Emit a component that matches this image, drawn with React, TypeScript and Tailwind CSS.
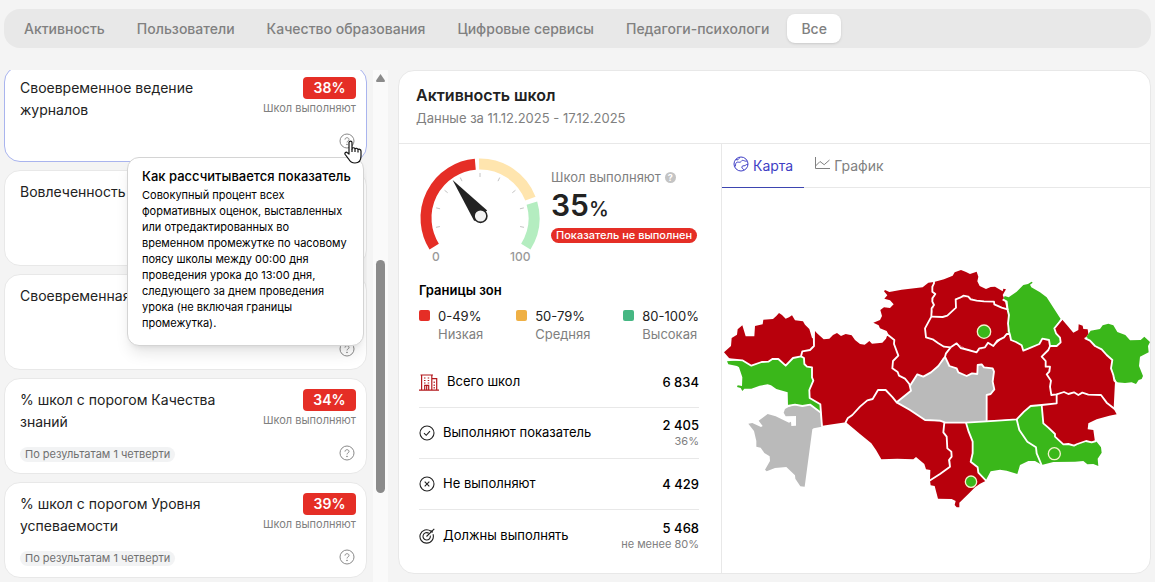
import React from "react";

const TABS = [
  "Активность",
  "Пользователи",
  "Качество образования",
  "Цифровые сервисы",
  "Педагоги-психологи",
  "Все",
];

const CARDS = [
  {
    id: "journals",
    title: "Своевременное ведение журналов",
    percent: "38%",
    active: true,
  },
  { id: "involvement", title: "Вовлеченность" },
  { id: "timely", title: "Своевременная" },
  {
    id: "quality",
    title: "% школ с порогом Качества знаний",
    percent: "34%",
    period: "По результатам 1 четверти",
  },
  {
    id: "level",
    title: "% школ с порогом Уровня успеваемости",
    percent: "39%",
    period: "По результатам 1 четверти",
  },
];

const ZONES = [
  { range: "0-49%", label: "Низкая", color: "bg-[#e52e26]" },
  { range: "50-79%", label: "Средняя", color: "bg-[#efb045]" },
  { range: "80-100%", label: "Высокая", color: "bg-[#46b783]" },
];

const RED = "#b8000c";
const GREEN = "#3ab71a";
const GRAY = "#bababa";

// Точка на дуге спидометра, угол в градусах против часовой стрелки
const polar = (r: number, deg: number) => {
  const a = (deg * Math.PI) / 180;
  return [61 + r * Math.cos(a), 62 - r * Math.sin(a)];
};

const arc = (from: number, to: number) => {
  const [x1, y1] = polar(54, from);
  const [x2, y2] = polar(54, to);
  const large = from - to > 180 ? 1 : 0;
  return `M${x1} ${y1}A54 54 0 ${large} 1 ${x2} ${y2}`;
};

function QuestionIcon() {
  return (
    <svg className="w-4 h-4" viewBox="0 0 16 16" fill="none" stroke="#8a8a8a">
      <circle cx="8" cy="8" r="7" />
      <path d="M6 6.6C6 5.4 6.9 4.7 8 4.7s2 .7 2 1.8c0 1.4-2 1.4-2 2.9" />
      <circle cx="8" cy="11.4" r=".4" fill="#8a8a8a" />
    </svg>
  );
}

function Gauge() {
  return (
    <svg className="w-[122px] h-[114px] shrink-0" viewBox="0 0 122 114">
      <g fill="none" strokeWidth="11">
        <path d={arc(212, 95)} stroke="#e52e26" />
        <path d={arc(91, 21)} stroke="#ffe5ae" />
        <path d={arc(16, -32)} stroke="#b4edc0" />
      </g>
      {[-12, 13, 38, 64, 90, 116, 142, 167, 192].map((deg) => {
        const [x1, y1] = polar(41, deg);
        const [x2, y2] = polar(45, deg);
        return (
          <line key={deg} x1={x1} y1={y1} x2={x2} y2={y2} stroke="#c4c4c4" />
        );
      })}
      <path d="M33.6 24 68.2 54.6 55.2 65Z" fill="#222" />
      <circle cx="61.5" cy="60" r="6.4" fill="#f2f2f2" stroke="#222" strokeWidth="1.6" />
      <g fontFamily="Inter, sans-serif" fontSize="12" fontWeight="500" fill="#999">
        <text x="13" y="105">0</text>
        <text x="91" y="105">100</text>
      </g>
    </svg>
  );
}

function KazakhstanMap() {
  return (
    <svg className="w-full" viewBox="21 0 1284 780" role="img" aria-label="Карта">
      <g>
        <path
          fill={RED}
          d="M27 277 48 258 50 234 66 224 68 208 82 196 92 229 118 229 120 198 143 193 145 179 174 177 184 168 192 159 201 165 212 176 222 172 231 166 240 181 264 184 270 194 283 207 291 234 297 236 297 258 285 270 262 275 258 289 234 294 212 318 190 298 172 297 160 305 140 306 109 318 82 302 44 296Z"
        />
        <path
          fill={GREEN}
          d="M36 304 82 300 109 317 140 306 160 305 172 297 190 297 212 317 234 294 258 289 267 294 268 312 276 320 291 322 291 352 295 362 283 390 284 414 316 433 316 456 286 433 262 437 240 433 219 437 218 397 197 391 184 387 168 376 158 373 134 377 109 386 88 386 82 393 77 384 66 381 68 376 81 378 82 352 72 322 66 318 40 313Z"
        />
        <path
          fill={GRAY}
          d="M222 440 240 434 262 438 286 434 316 456 320 500 296 505 292 508 269 680 256 679 241 656 240 646 214 621 180 624 155 634 150 629 165 603 164 589 148 579 137 563 124 560 124 543 117 513 100 491 112 489 138 501 143 498 131 482 158 462 182 469 222 488 228 485 229 498 243 497 243 468 212 469 206 458 210 447Z"
        />
        <path
          fill={RED}
          d="M300 213 306 220 326 238 343 236 354 225 366 219 378 228 392 222 410 226 420 240 435 252 449 254 455 250 463 243 471 251 502 248 513 236 516 228 523 228 538 240 537 252 550 287 534 303 532 325 548 336 552 347 570 356 583 372 588 392 545 427 533 412 512 390 489 390 473 417 457 421 435 440 412 465 398 475 393 487 322 497 316 433 284 414 283 390 295 362 291 352 291 322 276 320 268 312 267 294 258 289 262 274 285 270 297 258Z"
        />
      </g>

      <g transform="translate(435 0)">
        <path
          fill={RED}
          d="M75 90 88 96 125 89 188 82 205 68 222 66 217 95 226 102 217 125 222 135 214 170 195 205 198 232 218 238 252 260 272 262 258 280 255 290 235 318 213 337 190 350 172 343 151 377 135 356 117 347 113 336 97 325 99 303 115 287 102 252 103 240 88 228 80 213 60 205 56 196 40 188 60 180 66 168 61 150 72 142 90 144 101 133 90 121 73 116 82 106 72 94Z"
        />
        <path
          fill={RED}
          d="M222 66 252 58 278 47 284 37 303 30 318 36 330 42 350 35 355 50 352 64 359 78 378 87 392 81 405 80 428 94 430 86 438 88 428 105 434 119 440 148 425 143 403 133 402 125 372 124 350 122 325 110 300 113 287 118 288 142 262 168 214 170 222 135 217 125 226 102 217 95Z"
        />
        <path
          fill={RED}
          d="M214 170 262 168 288 142 287 118 300 113 325 110 350 122 402 125 403 133 440 148 447 165 443 215 447 222 432 232 410 242 400 258 385 248 375 262 350 276 325 272 310 262 290 250 272 262 252 260 218 238 198 232 195 205Z"
        />
        <path
          fill={RED}
          d="M255 290 258 280 272 262 290 250 325 272 350 276 375 262 385 248 400 258 432 232 447 222 453 240 468 246 485 256 490 272 538 252 547 236 567 240 570 258 565 270 545 290 557 303 557 320 570 320 560 343 573 362 570 380 574 405 590 403 590 430 545 435 512 440 492 455 470 478 380 482 380 405 392 402 403 388 398 365 402 335 398 325 372 322 365 313 353 315 352 342 336 340 320 348 295 337 290 325 268 318Z"
        />
        <path
          fill={GRAY}
          d="M255 290 268 318 290 325 295 337 320 348 336 340 352 342 353 315 365 313 372 322 398 325 402 335 398 365 403 388 392 402 380 405 380 482 318 488 253 488 195 480 150 450 110 427 153 392 151 375 172 343 190 350 213 337 235 318 248 295Z"
        />
        <path
          fill={RED}
          d="M110 427 150 450 195 480 253 486 250 517 260 530 262 565 275 580 270 620 210 662 211 630 198 628 193 612 168 591 160 598 112 596 64 598 48 570 34 550 0 522 -42 487 -37 475 0 440 22 421 38 417 54 390 77 390Z"
        />
        <path
          fill={RED}
          d="M253 488 318 488 326 515 338 545 338 580 332 605 353 622 355 638 378 662 360 671 345 682 325 702 298 728 298 742 290 742 284 735 287 723 275 717 234 716 224 678 212 676 210 662 270 620 275 580 262 565 260 530 250 517Z"
        />
        <path
          fill={GREEN}
          d="M318 488 380 483 470 478 478 510 502 545 528 562 530 580 545 614 525 603 505 603 480 615 472 642 440 632 420 629 392 634 378 660 355 638 353 622 332 605 338 580 338 545 326 515Z"
        />
      </g>

      <g transform="translate(855 0)">
        <path
          fill={GREEN}
          d="M10 118 14 108 26 112 50 95 70 75 84 72 95 65 98 68 90 74 94 82 120 97 140 112 182 177 163 205 170 222 182 235 180 248 170 258 150 258 147 240 127 236 118 252 85 266 70 272 65 256 48 246 33 240 22 215 24 190 22 150 20 128Z"
        />
        <path
          fill={RED}
          d="M187 179 205 200 220 218 235 210 236 193 248 197 250 207 263 208 265 222 256 235 270 242 285 258 305 268 337 300 333 325 345 365 341 445 325 430 303 405 265 404 247 398 235 405 222 397 205 402 192 396 154 405 150 380 153 362 140 343 150 320 137 320 137 303 125 290 145 270 150 258 170 258 182 245 180 233 170 222 163 205Z"
        />
        <path
          fill={GREEN}
          d="M265 222 272 212 300 207 308 196 325 191 340 196 352 216 376 225 390 241 422 240 433 230 450 246 444 258 446 277 420 290 417 318 429 348 425 357 416 360 408 372 395 367 375 369 350 367 340 345 333 325 337 300 305 268 285 258 270 242 256 235Z"
        />
        <path
          fill={RED}
          d="M125 435 170 430 170 403 192 396 205 402 222 397 235 405 247 398 265 404 303 405 340 445 350 463 328 467 290 478 265 490 263 508 280 510 285 545 258 545 232 555 205 555 190 553 165 530 165 522 145 503 130 490Z"
        />
        <path
          fill={GREEN}
          d="M50 478 72 455 92 438 125 435 130 490 145 503 165 522 165 530 190 553 232 555 258 543 290 545 303 562 305 578 293 596 295 618 280 612 262 613 250 603 225 605 160 606 125 615 110 580 108 562 82 545 58 510Z"
        />
      </g>

      {/* границы областей */}
      <g fill="none" stroke="#fff" strokeWidth="5.5" strokeLinejoin="round">
        <path d="M34 297 82 301 109 317 140 306 160 305 172 297 190 297 212 317 234 294 258 289 262 274 285 270 297 258 296 215" />
        <path d="M258 289 267 294 268 312 276 320 291 322 291 352 295 362 283 390 284 414 316 433 321 500" />
        <path d="M217 438 240 434 262 438 286 434 318 458" />
        <g transform="translate(435 0)">
          <path d="M84 225 103 240 102 252 115 287 99 303 97 325 113 336 117 347 135 356 148 372 153 392 110 427 98 412 77 390 54 390 38 417 22 421 0 440 -23 465 -37 475 -44 489" />
          <path d="M222 62 222 70 217 80 217 95 226 102 217 115 217 125 222 135 215 145 214 170 195 205 198 232 218 238 235 250 252 260 272 262" />
          <path d="M214 170 248 171 262 167 288 143 287 118 300 113 310 107 325 110 332 118 350 122 372 124 402 125 403 133 425 143 445 149" />
          <path d="M272 262 290 250 302 264 325 270 350 277 358 265 375 262 384 248 400 258 412 242 432 232 440 222 450 222" />
          <path d="M272 262 258 280 255 290 235 318 213 337 190 350 172 343 150 377" />
          <path d="M255 290 268 318 290 325 295 337 320 348 336 340 352 342 353 315 365 313 372 322 398 325 402 335 398 365 403 388 392 402 380 405 380 482" />
          <path d="M110 427 150 450 195 480 240 482 256 488 318 488 380 484 470 478 492 455 512 438 545 435 590 430 590 403" />
          <path d="M253 488 250 517 260 530 262 565 274 575 275 590 267 600 270 620 240 642 207 663" />
          <path d="M318 488 326 515 338 545 338 580 332 605 353 622 355 638 380 664" />
        </g>
        <g transform="translate(855 0)">
          <path d="M8 118 20 125 23 150 27 165 24 190 27 215 30 225 33 240 48 246 65 256 70 272 85 266 118 252 127 236 147 240 150 258 170 258 182 247 180 233 168 220 163 205 186 177" />
          <path d="M150 258 145 270 125 290 137 303 137 320 150 320 148 335 140 343 153 362 150 380 154 405 170 403 192 396 205 402 222 397 235 405 247 398 265 404 303 405 320 428 345 448" />
          <path d="M262 234 256 235 270 242 285 258 305 268 320 285 337 300 333 325 340 345 343 362 352 371" />
          <path d="M125 435 130 490 145 503 165 522 165 530 190 553 205 552 222 557 232 552 258 543 275 547 288 543" />
          <path d="M50 478 58 510 82 545 108 562 110 580 126 618" />
        </g>
      </g>

      <g fill={GREEN} stroke="#f4f4cf" strokeWidth="4">
        <circle cx="807" cy="215" r="20" />
        <circle cx="768" cy="665" r="17" />
        <circle cx="1018" cy="581" r="18" />
      </g>
    </svg>
  );
}

function Tooltip() {
  return (
    <div
      role="tooltip"
      className="absolute top-[90px] right-[2px] z-20 w-[237px] rounded-xl border border-[#d4d4d4] bg-white px-3.5 pt-2 pb-3.5 shadow-lg text-black"
    >
      <p className="mb-px text-[13px] leading-5 font-medium whitespace-nowrap">
        Как рассчитывается показатель
      </p>
      <p className="text-[11px] leading-4">
        Совокупный процент всех формативных оценок, выставленных или
        отредактированных во временном промежутке по часовому поясу школы между
        00:00 дня проведения урока до 13:00 дня, следующего за днем проведения
        урока (не включая границы промежутка).
      </p>
    </div>
  );
}

function Cursor() {
  return (
    <svg
      className="absolute top-[73px] right-1 z-30 w-[18px] h-6"
      viewBox="0 0 18 24"
      fill="#fff"
      stroke="#111"
      strokeWidth="1.2"
      strokeLinejoin="round"
    >
      <path d="M5 14V2.6C5 .5 8 .5 8 2.6V9c.3-1.8 3-1.6 3 .2.5-1.4 3-1.2 3 .6.6-1 3-.7 3 1.2v5c0 4-2 7-6 7-3.6 0-5-1.3-6.5-4.2L1.2 14.5c-1-1.8.9-3 2.2-1.8Z" />
      <path d="M8 9v3M11 9.5V12M14 10.2V12.5" fill="none" />
    </svg>
  );
}

function CheckIcon() {
  return (
    <svg className="w-4 h-4" viewBox="0 0 16 16" fill="none" stroke="#222" strokeWidth="1.1">
      <circle cx="8" cy="8" r="7" />
      <path d="m5 8.2 2.2 2.1L11 6.2" />
    </svg>
  );
}

function CrossIcon() {
  return (
    <svg className="w-4 h-4" viewBox="0 0 16 16" fill="none" stroke="#222" strokeWidth="1.1">
      <circle cx="8" cy="8" r="7" />
      <path d="m5.7 5.7 4.6 4.6M10.3 5.7l-4.6 4.6" />
    </svg>
  );
}

function TargetIcon() {
  return (
    <svg className="w-4 h-4" viewBox="0 0 16 16" fill="none" stroke="#222" strokeWidth="1.1">
      <path d="M11.8 3.2A6.7 6.7 0 1 0 14 6.3" />
      <path d="M9.8 5.3A3.7 3.7 0 1 0 11.3 7.6" />
      <path d="M7.5 8.5 15.3.8M12 2.2V4h2" />
    </svg>
  );
}

function BuildingIcon() {
  return (
    <svg className="w-5 h-[17px]" viewBox="0 0 20 17" fill="none" stroke="#b3191d" strokeWidth="1.2">
      <path d="M0 16.2h20M1.5 1h12.5M2.6 1v15M12.8 1v15M12.8 4.6h4.9V16" />
      <path d="M5.7 16v-4.6h4V16M7.7 11.4V16" />
      <path d="M5 4h1.5M8.7 4h1.5M5 6.5h1.5M8.7 6.5h1.5M5 9h1.5M8.7 9h1.5M15.2 7.5V9M15.2 10.5V12M15.2 13v1.5" />
    </svg>
  );
}

const STATS = [
  { label: "Всего школ", value: "6 834", icon: <BuildingIcon /> },
  { label: "Выполняют показатель", value: "2 405", note: "36%", icon: <CheckIcon /> },
  { label: "Не выполняют", value: "4 429", icon: <CrossIcon /> },
  { label: "Должны выполнять", value: "5 468", note: "не менее 80%", icon: <TargetIcon /> },
];

export default function App() {
  return (
    <div className="h-screen flex flex-col bg-[#f4f4f4] font-['Inter',sans-serif] text-[#222] px-1 pt-[9px] overflow-hidden">
      <nav className="flex items-center gap-1 h-[39px] shrink-0 rounded-2xl bg-[#e8e8e8] px-1.5">
        {TABS.map((tab) => (
          <button
            key={tab}
            className={`h-[29px] px-3.5 rounded-lg text-[14px] font-medium whitespace-nowrap text-[#808080] ${
              tab === "Все" ? "bg-white shadow-sm" : ""
            }`}
          >
            {tab}
          </button>
        ))}
      </nav>

      <div className="flex flex-1 min-h-0 mt-[22px]">
        {/* Список показателей */}
        <aside className="w-[363px] shrink-0 overflow-hidden">
          <div className="-mt-1 flex flex-col gap-2">
            {CARDS.map((card) => (
              <article
                key={card.id}
                className={`relative flex flex-col h-24 shrink-0 rounded-2xl border bg-white pl-[15px] pr-2.5 pt-2.5 ${
                  card.active ? "border-[#a9b4ee]" : "border-[#e8e8e8]"
                }`}
              >
                <div className="flex justify-between">
                  <h3 className="w-[210px] text-[14px] leading-[22px]">
                    {card.title}
                  </h3>
                  {card.percent && (
                    <div className="flex flex-col items-end">
                      <span className="w-[53px] h-[22px] rounded bg-[#e52e26] text-center text-[14px] leading-[22px] font-semibold text-white">
                        {card.percent}
                      </span>
                      <span className="text-[11px] leading-[18px] text-[#808080]">
                        Школ выполняют
                      </span>
                    </div>
                  )}
                </div>
                {card.period && (
                  <span className="mt-3.5 self-start rounded-full bg-[#f2f3f4] px-[5px] text-[11px] leading-[15px] text-[#707070]">
                    {card.period}
                  </span>
                )}
                <button
                  aria-label="Как рассчитывается показатель"
                  className="absolute right-[11px] bottom-3"
                >
                  <QuestionIcon />
                </button>
                {card.active && <Tooltip />}
                {card.active && <Cursor />}
              </article>
            ))}
          </div>
        </aside>

        <div className="ml-[6px] w-[15px] shrink-0 bg-[#fafafa] flex flex-col items-center">
          <svg className="mt-1 w-[9px] h-2" viewBox="0 0 9 8" fill="#8b8b8b">
            <path d="M4.5 0 9 6.5Q9 8 8 8H1Q0 8 0 6.5Z" />
          </svg>
          <div className="mt-[178px] w-[9px] h-[233px] rounded-full bg-[#8b8b8b]" />
        </div>

        {/* Активность школ */}
        <section className="ml-[10px] mb-2 flex flex-col flex-1 min-w-0 rounded-2xl border border-[#e8e8e8] bg-white overflow-hidden">
          <header className="h-[73px] shrink-0 border-b border-[#e8e8e8] px-[17px] pt-3">
            <h2 className="text-[16px] leading-6 font-semibold">
              Активность школ
            </h2>
            <p className="text-[13px] leading-[22px] text-[#808080]">
              Данные за 11.12.2025 - 17.12.2025
            </p>
          </header>

          <div className="flex flex-1 min-h-0">
            <div className="w-[323px] shrink-0 border-r border-[#e8e8e8] pl-5 pr-[22px]">
              <div className="flex gap-2.5 pt-3">
                <Gauge />
                <div className="flex flex-col items-start pt-3">
                  <p className="flex items-center gap-1 text-[13px] leading-[18px] text-[#808080]">
                    Школ выполняют
                    <span className="w-[11px] h-[11px] rounded-full bg-[#c4c4c4] text-center text-[9px] leading-[11px] font-bold text-white">
                      ?
                    </span>
                  </p>
                  <p className="text-[30px] leading-[38px] font-semibold">
                    35<span className="text-[20px] font-medium">%</span>
                  </p>
                  <span className="h-[15px] rounded-full bg-[#e52e26] px-[5px] text-[11px] leading-[14px] font-medium text-white whitespace-nowrap">
                    Показатель не выполнен
                  </span>
                </div>
              </div>

              <h3 className="mt-3 text-[13px] leading-4 font-semibold text-black">
                Границы зон
              </h3>
              <ul className="mt-[9px] flex justify-between">
                {ZONES.map((zone) => (
                  <li key={zone.range} className="flex gap-2">
                    <span className={`mt-[3px] w-[11px] h-[11px] rounded-xs ${zone.color}`} />
                    <div className="text-[13px] leading-[18px]">
                      <p>{zone.range}</p>
                      <p className="text-[#808080]">{zone.label}</p>
                    </div>
                  </li>
                ))}
              </ul>

              <ul className="mt-3.5 divide-y divide-[#e8e8e8] text-[13px] text-black">
                {STATS.map((stat) => (
                  <li key={stat.label} className="flex items-center gap-2 h-[51px]">
                    {stat.icon}
                    <span>{stat.label}</span>
                    <div className="ml-auto text-right leading-4">
                      <p className="font-medium">{stat.value}</p>
                      {stat.note && (
                        <p className="text-[11px] text-[#808080]">{stat.note}</p>
                      )}
                    </div>
                  </li>
                ))}
              </ul>
            </div>

            <div className="flex flex-col flex-1 min-w-0">
              <div className="flex h-11 shrink-0 border-b border-[#e8e8e8] text-[14px]">
                <button className="-mb-px flex items-center gap-1 border-b border-[#3d45b0] px-[11px] text-[#3e3ec4]">
                  <svg className="w-4 h-4 -mt-1" viewBox="0 0 16 16" fill="none" stroke="currentColor">
                    <circle cx="8" cy="8" r="7" />
                    <path d="M1.8 10.8C3 10 2 7.8 3.5 6.5 5 5.5 6 6.8 7.5 6 9 5 8.5 4 10.5 4.5 12 5 12.5 5.5 14.2 5M3 3.5C4.5 4.5 6 3.5 6.5 1.3M14.8 8.5C13 8 12.5 10 11 9.8 9.5 9.5 8.5 10.5 9 12 9.5 13 10.5 12.5 10.8 14.2" />
                  </svg>
                  <span>Карта</span>
                </button>
                <button className="flex items-center gap-1 px-2.5 text-[#808080]">
                  <svg className="w-4 h-4 -mt-1" viewBox="0 0 16 16" fill="none" stroke="currentColor">
                    <path d="M1.5 1v11.5H16M1.5 10 6 5.5l4.2 3.2L15.5 4" />
                  </svg>
                  <span>График</span>
                </button>
              </div>
              <div className="pt-[72px]">
                <KazakhstanMap />
              </div>
            </div>
          </div>
        </section>
      </div>
    </div>
  );
}
